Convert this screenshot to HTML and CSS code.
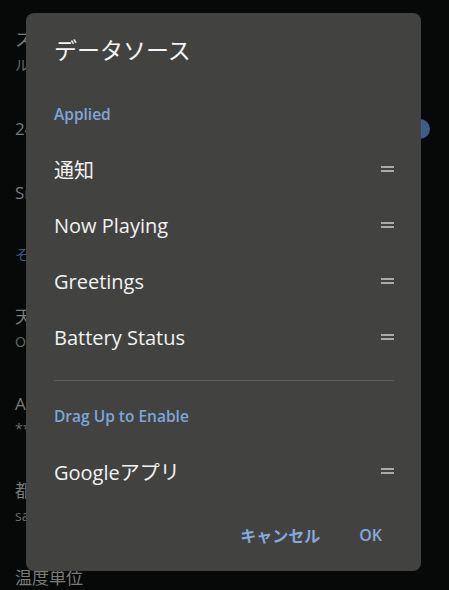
FILE: index.html
```html
<!DOCTYPE html>
<html lang="ja">
<head>
<meta charset="utf-8">
<link rel="stylesheet" href="styles.css">
</head>
<body>
<div class="settings">
  <div class="item two"><div class="t">スマートスペース</div><div class="s">ルック</div></div>
  <div class="item one"><div class="t">24時間表示</div><div class="switch"><span class="thumb"></span></div></div>
  <div class="item one"><div class="t">Smartspacer</div></div>
  <div class="header">その他</div>
  <div class="item two"><div class="t">天気</div><div class="s">OpenWeather</div></div>
  <div class="item two"><div class="t">API キー</div><div class="s">********</div></div>
  <div class="item two"><div class="t">都市</div><div class="s">sapporo</div></div>
  <div class="item last"><div class="t">温度単位</div></div>
</div>

<div class="dialog">
  <div class="title">データソース</div>
  <div class="sub first">Applied</div>
  <div class="row"><span>通知</span><i class="handle"></i></div>
  <div class="row"><span>Now Playing</span><i class="handle"></i></div>
  <div class="row"><span>Greetings</span><i class="handle"></i></div>
  <div class="row"><span>Battery Status</span><i class="handle"></i></div>
  <div class="divider"></div>
  <div class="sub second">Drag Up to Enable</div>
  <div class="row"><span>Googleアプリ</span><i class="handle"></i></div>
  <div class="actions">
    <span class="btn">キャンセル</span>
    <span class="btn">OK</span>
  </div>
</div>
</body>
</html>
```

FILE: styles.css
```css
html, body {
  margin: 0;
  padding: 0;
  background: #070909;
  width: 449px;
  height: 590px;
  overflow: hidden;
  font-family: "Open Sans", "Noto Sans CJK JP", sans-serif;
}

.settings {
  padding-top: 10px;
  height: 580px;
  overflow: hidden;
}

.item {
  display: flex;
  align-items: flex-start;
  flex-direction: column;
  padding: 0 19px 0 15px;
  box-sizing: border-box;
}
.item.two {
  height: 87px;
  padding-top: 19px;
}
.item.one {
  height: 64px;
  padding-top: 21px;
  flex-direction: row;
  justify-content: space-between;
}
.item.last {
  padding-top: 19px;
}
.t {
  font-size: 17px;
  line-height: 22px;
  color: #7a7b7a;
}
.s {
  margin-top: 4px;
  font-size: 14px;
  line-height: 20px;
  color: #6a6b6a;
}
.header {
  height: 62px;
  padding: 20px 15px 0;
  box-sizing: border-box;
  font-size: 14px;
  line-height: 20px;
  color: #3f5c88;
}
.switch {
  width: 36px;
  height: 22px;
  display: flex;
  justify-content: flex-end;
  align-items: center;
}
.thumb {
  width: 20px;
  height: 20px;
  border-radius: 50%;
  background: #3e5c8a;
}

.dialog {
  position: absolute;
  left: 26px;
  top: 13px;
  width: 395px;
  height: 558px;
  box-sizing: border-box;
  background: #424341;
  border-radius: 8px;
  padding: 22px 0 18px 28px;
  display: flex;
  flex-direction: column;
  color: #ffffff;
}
.title {
  font-size: 23px;
  line-height: 30px;
  color: #f4f4f4;
}
.sub {
  font-size: 15.5px;
  line-height: 20px;
  font-weight: 600;
  color: #80a5d8;
  padding-bottom: 17px;
}
.sub.first { margin-top: 39px; }
.sub.second { margin-top: 25px; }
.row {
  height: 56px;
  display: flex;
  align-items: center;
  justify-content: space-between;
  padding-right: 27px;
  font-size: 20px;
  color: #f2f2f2;
}
.handle {
  width: 13px;
  height: 6px;
  border-top: 2px solid #a9aaa8;
  border-bottom: 2px solid #a9aaa8;
  box-sizing: border-box;
}
.divider {
  margin-top: 15px;
  margin-right: 27px;
  height: 1px;
  background: #5c5d5b;
}
.actions {
  margin-top: 18px;
  height: 36px;
  display: flex;
  justify-content: flex-end;
  align-items: center;
  gap: 23px;
  padding-right: 31px;
}
.btn {
  padding: 0 8px;
  font-size: 16px;
  font-weight: 600;
  color: #84a9dc;
}
```
